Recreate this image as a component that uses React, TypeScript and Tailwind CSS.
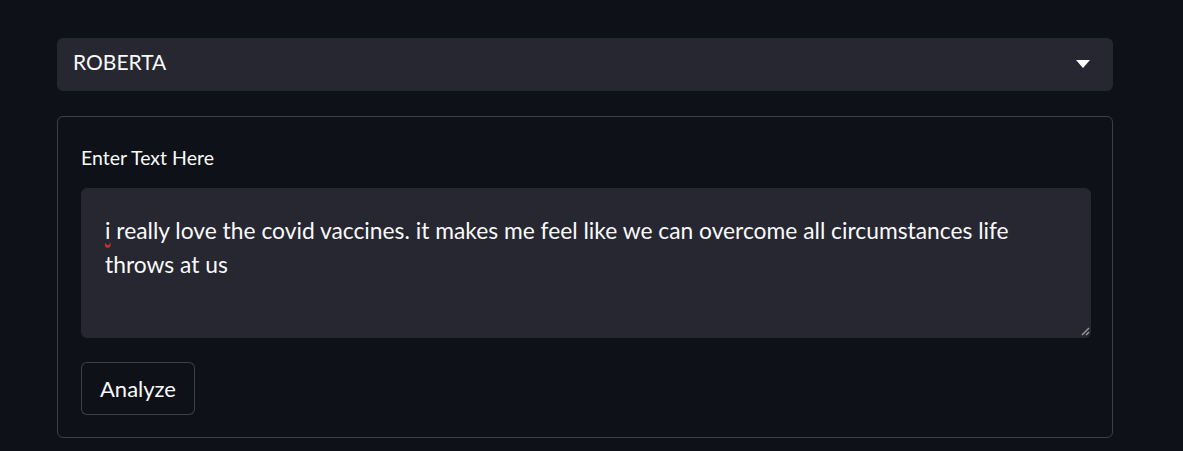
export default function App() {
  return (
    <div className="min-h-[451px] bg-[#0e1117] pt-[38px] font-['Lato',sans-serif] text-[#fafafa]">
      <div className="ml-[57px] w-[1056px]">
        <div className="flex h-[53px] items-center justify-between rounded-md bg-[#262730] pl-4 pr-[23px]">
          <span className="-mt-[5px] text-[21px]">ROBERTA</span>
          <svg width="14" height="9" viewBox="0 0 14 9" className="-mt-[1px] fill-white">
            <path d="M0 0h14L7 8z" />
          </svg>
        </div>

        <form className="mt-[25px] rounded-md border border-[#fafafa]/20 pl-[23px] pt-[29px] pb-[22px]">
          <label className="block text-[19.5px] leading-6">Enter Text Here</label>
          <div className="relative mt-[18px] w-[1010px]">
            <div className="h-[150px] rounded-md bg-[#262730] px-6 pt-[25px] text-[22.8px] leading-[34px]">
              <span className="underline decoration-wavy decoration-[#d32f2f] underline-offset-2">i</span> really love the covid vaccines. it makes me feel like we can overcome all circumstances life throws at us
            </div>
            <svg width="10" height="10" viewBox="0 0 10 10" className="absolute right-[1px] bottom-[2px] stroke-[#9a9a9f]">
              <path d="M2 9L9 2M6 9L9 6" strokeWidth="1.4" />
            </svg>
          </div>
          <button
            type="button"
            className="mt-[24px] h-[53px] rounded-md border border-[#fafafa]/20 bg-[#0e1117] px-[18px] text-[22px]"
          >
            Analyze
          </button>
        </form>
      </div>
    </div>
  );
}
